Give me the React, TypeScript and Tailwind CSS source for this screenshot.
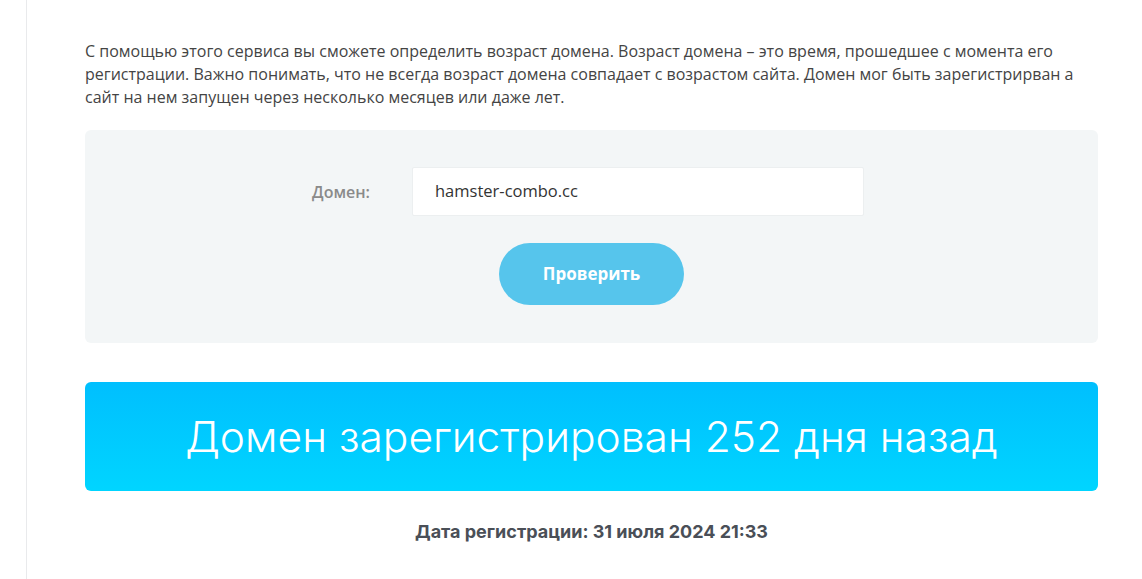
export default function App() {
  return (
    <div className="flex min-h-[579px] bg-white" style={{ fontFamily: '"Open Sans", "Noto Sans", sans-serif' }}>
      <div className="w-[26px] shrink-0" />
      <div className="w-px shrink-0 bg-[#e9eaec]" />
      <main className="w-[1071px] pl-[58px] pt-[40px]">
        <div className="w-[1013px]">
          <p className="whitespace-nowrap text-[16px] leading-[23px] text-[#444]">
            С помощью этого сервиса вы сможете определить возраст домена. Возраст домена – это время, прошедшее с момента его
            <br />
            регистрации. Важно понимать, что не всегда возраст домена совпадает с возрастом сайта. Домен мог быть зарегистрирван а
            <br />
            сайт на нем запущен через несколько месяцев или даже лет.
          </p>

          <div className="mt-[21px] h-[213px] rounded-md bg-[#f3f6f7] pt-[37px]">
            <div className="flex items-center">
              <label className="w-[327px] pr-[42px] text-right text-[16px] font-semibold text-[#8a8a8a]">Домен:</label>
              <div className="flex h-[49px] w-[452px] items-center rounded-[2px] border border-[#eceff0] bg-white px-[22px] text-[16.5px] text-[#333]">
                hamster-combo.cc
              </div>
            </div>
            <div className="mt-[27px] flex justify-center">
              <button className="h-[62px] w-[185px] rounded-full bg-[#56c5ec] text-[17px] font-bold text-white">
                Проверить
              </button>
            </div>
          </div>

          <div className="mt-[39px] flex h-[109px] items-center justify-center rounded-md bg-gradient-to-b from-[#00bffe] to-[#00d5ff]">
            <h2 className="text-[42.5px] font-light text-white" style={{ fontFamily: 'Inter, "Noto Sans", sans-serif' }}>
              Домен зарегистрирован 252 дня назад
            </h2>
          </div>

          <p
            className="mt-[27px] text-center text-[18px] font-bold text-[#4a4f57]"
            style={{ fontFamily: 'Inter, "Noto Sans", sans-serif' }}
          >
            Дата регистрации: 31 июля 2024 21:33
          </p>
        </div>
      </main>
    </div>
  );
}
